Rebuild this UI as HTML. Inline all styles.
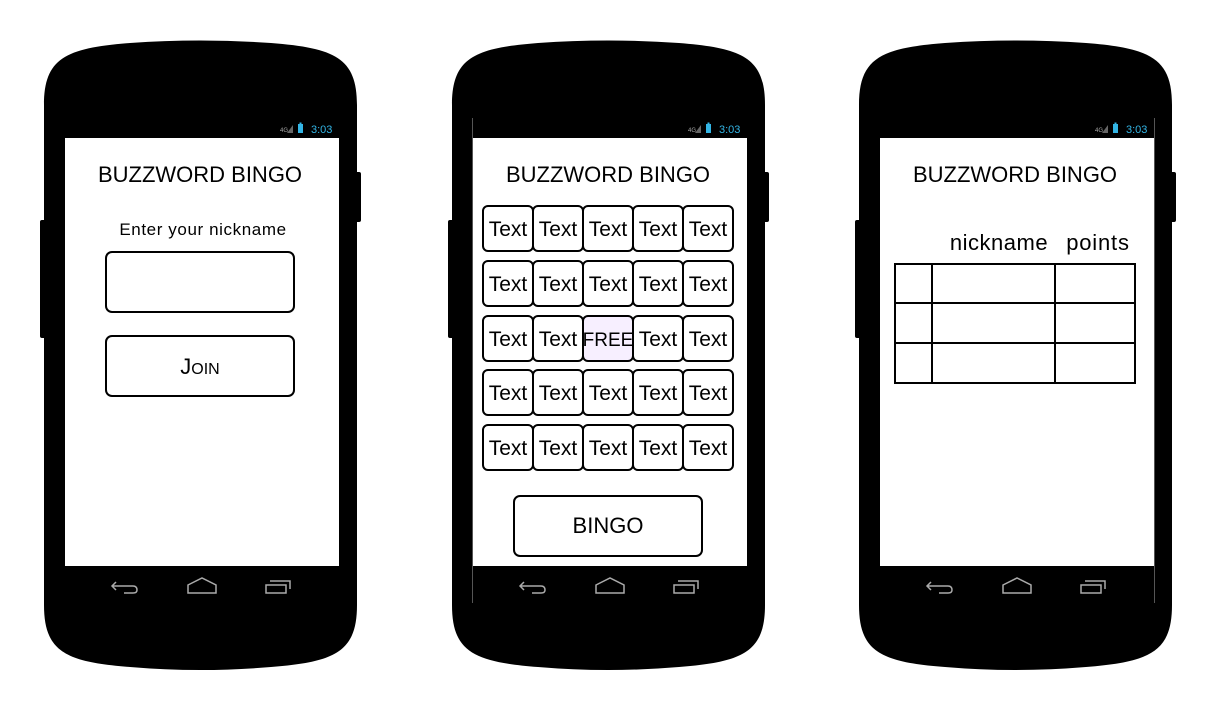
<!DOCTYPE html>
<html><head><meta charset="utf-8"><style>
html,body{margin:0;padding:0;background:#fff;}
svg{display:block}
text{font-family:"Liberation Sans",sans-serif;}
</style></head><body>
<svg width="1216" height="711" viewBox="0 0 1216 711" xmlns="http://www.w3.org/2000/svg">
<defs>
<g id="phone">
  <rect x="353" y="172" width="8" height="50" rx="2" fill="#000"/>
  <rect x="40" y="220" width="8" height="118" rx="2" fill="#000"/>
  <path d="M44,105 C44,58 66,48 130,43 Q200,38 271,43 C335,48 357,58 357,105 L357,605 C357,652 335,662 271,667 Q200,673 130,667 C66,662 44,652 44,605 Z" fill="#000"/>
  <rect x="65" y="138" width="274" height="428" fill="#fff"/>
  <text x="280" y="132" font-size="6" fill="#aaa">4G</text>
  <path d="M287,133 L293,125 L293,133 Z" fill="#666"/>
  <rect x="298" y="124" width="5" height="9" fill="#33b5e5"/>
  <rect x="299.5" y="122.5" width="2" height="2" fill="#33b5e5"/>
  <text x="311" y="133" font-size="11" fill="#33b5e5">3:03</text>
  <path d="M116,582 L112,586 L116,590 M112,586 L133,586 Q137,586 137,590 Q137,593 133,593 L124,593" fill="none" stroke="#aaa" stroke-width="1.5"/>
  <path d="M188,585 L202,578 L216,585 L216,593 L188,593 Z" fill="none" stroke="#aaa" stroke-width="1.5"/>
  <path d="M266,585 L286,585 L286,593 L266,593 Z M270,581 L290,581 L290,589" fill="none" stroke="#aaa" stroke-width="1.5"/>
</g>
<g id="cell"><rect x="0" y="0" width="50" height="45" rx="5" fill="none" stroke="#000" stroke-width="2"/></g>
</defs>

<use href="#phone"/>
<use href="#phone" x="408"/>
<use href="#phone" x="815"/>
<line x1="472.5" y1="118" x2="472.5" y2="603" stroke="#555" stroke-width="1"/>
<line x1="1154.5" y1="118" x2="1154.5" y2="603" stroke="#555" stroke-width="1"/>

<!-- phone 1 -->
<text x="200" y="182" font-size="22" text-anchor="middle">BUZZWORD BINGO</text>
<text x="203" y="235" font-size="17" text-anchor="middle" letter-spacing="0.6">Enter your nickname</text>
<rect x="106" y="252" width="188" height="60" rx="6" fill="#fff" stroke="#000" stroke-width="2"/>
<rect x="106" y="336" width="188" height="60" rx="6" fill="#fff" stroke="#000" stroke-width="2"/>
<text x="200" y="374" font-size="22" text-anchor="middle">J<tspan font-size="16">OIN</tspan></text>

<!-- phone 2 -->
<text x="608" y="182" font-size="22" text-anchor="middle">BUZZWORD BINGO</text>
<rect x="583" y="316" width="50" height="45" rx="5" fill="#f7efff"/>
<g font-size="21" text-anchor="middle">
<g id="row">
<use href="#cell" x="483" y="206"/><use href="#cell" x="533" y="206"/><use href="#cell" x="583" y="206"/><use href="#cell" x="633" y="206"/><use href="#cell" x="683" y="206"/>
</g>
<use href="#row" y="55"/><use href="#row" y="110"/><use href="#row" y="164"/><use href="#row" y="219"/>
<g id="trow"><text x="508" y="236">Text</text><text x="558" y="236">Text</text><text x="608" y="236">Text</text><text x="658" y="236">Text</text><text x="708" y="236">Text</text></g>
<use href="#trow" y="55"/>
<text x="508" y="346">Text</text><text x="558" y="346">Text</text><text x="608" y="346" font-size="19">FREE</text><text x="658" y="346">Text</text><text x="708" y="346">Text</text>
<use href="#trow" y="164"/><use href="#trow" y="219"/>
</g>
<rect x="514" y="496" width="188" height="60" rx="6" fill="#fff" stroke="#000" stroke-width="2"/>
<text x="608" y="533" font-size="22" text-anchor="middle">BINGO</text>

<!-- phone 3 -->
<text x="1015" y="182" font-size="22" text-anchor="middle">BUZZWORD BINGO</text>
<text x="999" y="250" font-size="22" text-anchor="middle" letter-spacing="0.5">nickname</text>
<text x="1098" y="250" font-size="22" text-anchor="middle" letter-spacing="0.8">points</text>
<g stroke="#000" stroke-width="2" fill="none">
<rect x="895" y="264" width="240" height="119"/>
<line x1="895" y1="303" x2="1135" y2="303"/>
<line x1="895" y1="343" x2="1135" y2="343"/>
<line x1="932" y1="264" x2="932" y2="383"/>
<line x1="1055" y1="264" x2="1055" y2="383"/>
</g>
</svg>
</body></html>
